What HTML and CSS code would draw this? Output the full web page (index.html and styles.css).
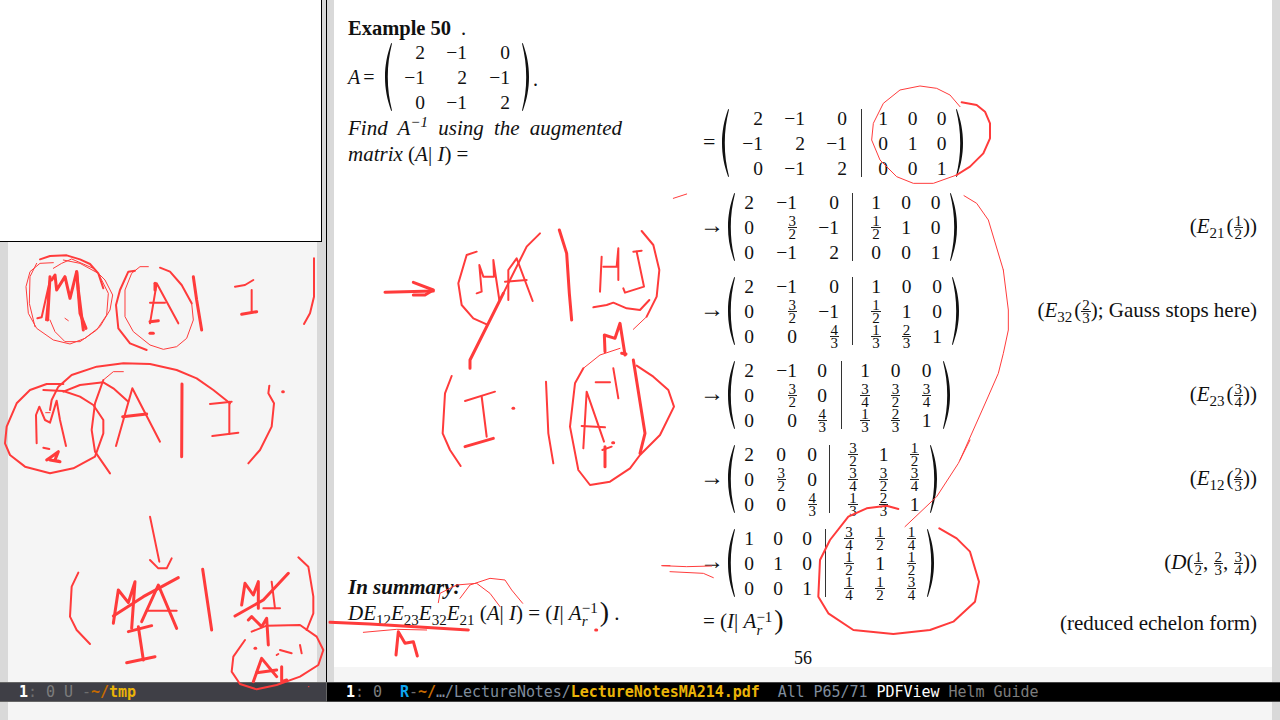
FILE: index.html
```html
<!DOCTYPE html>
<html lang="en">
<head>
<meta charset="utf-8">
<title>LectureNotesMA214.pdf</title>
<link rel="stylesheet" href="styles.css">
</head>
<body>
<svg class="defs" aria-hidden="true"><symbol id="paren" viewBox="0 0 7 68" preserveAspectRatio="none"><path d="M6.2 0C2 12 0 22 0 34c0 12 2 22 6.2 34l.8-.5C4.2 56 2.8 46 2.8 34S4.2 12 7 .5Z"/></symbol></svg>
<div class="frame">
  <div class="windows">
    <aside class="notes">
      <div class="thumb"></div>
      <div class="notes-canvas"></div>
    </aside>
    <main class="viewer">
      <section class="page">
        <div class="columns">
          <div class="col-left">
            <div class="intro">
              <p class="title"><b>Example 50</b><span class="title-dot">.</span></p>
              <div class="def-row">
                <span class="def-a"><i>A</i> =</span>
                <div class="matrix m0">
                  <svg class="paren"><use href="#paren"/></svg>
                  <div class="cells left"><span>2</span><span>−1</span><span>0</span><span>−1</span><span>2</span><span>−1</span><span>0</span><span>−1</span><span>2</span></div>
                  <svg class="paren flip"><use href="#paren"/></svg>
                </div>
                <span class="def-dot">.</span>
              </div>
              <p class="find"><i>Find A<sup>−1</sup> using the augmented matrix</i> (<i>A</i>| <i>I</i>) =</p>
            </div>
            <div class="summary">
              <p class="summary-head"><b><i>In summary:</i></b></p>
              <p class="summary-eq"><i>DE</i><sub>12</sub><i>E</i><sub>23</sub><i>E</i><sub>32</sub><i>E</i><sub>21</sub> (<i>A</i>| <i>I</i>) = (<i>I</i>| <i>A</i><span class="supsub"><sup>−1</sup><sub><i>r</i></sub></span><span class="big">)</span> .</p>
            </div>
          </div>
          <div class="col-right">
            <div class="step">
              <span class="op eq">=</span>
              <div class="matrix m1">
                <svg class="paren"><use href="#paren"/></svg>
                <div class="cells left"><span>2</span><span>−1</span><span>0</span><span>−1</span><span>2</span><span>−1</span><span>0</span><span>−1</span><span>2</span></div>
                <div class="bar"></div>
                <div class="cells right"><span>1</span><span>0</span><span>0</span><span>0</span><span>1</span><span>0</span><span>0</span><span>0</span><span>1</span></div>
                <svg class="paren flip"><use href="#paren"/></svg>
              </div>
            </div>
            <div class="step">
              <span class="op">→</span>
              <div class="matrix m2">
                <svg class="paren"><use href="#paren"/></svg>
                <div class="cells left"><span>2</span><span>−1</span><span>0</span><span>0</span><span class="frac"><span>3</span><span>2</span></span><span>−1</span><span>0</span><span>−1</span><span>2</span></div>
                <div class="bar"></div>
                <div class="cells right"><span>1</span><span>0</span><span>0</span><span class="frac"><span>1</span><span>2</span></span><span>1</span><span>0</span><span>0</span><span>0</span><span>1</span></div>
                <svg class="paren flip"><use href="#paren"/></svg>
              </div>
              <span class="why">(<i>E</i><sub>21</sub>(<span class="frac"><span>1</span><span>2</span></span>))</span>
            </div>
            <div class="step">
              <span class="op">→</span>
              <div class="matrix m3">
                <svg class="paren"><use href="#paren"/></svg>
                <div class="cells left"><span>2</span><span>−1</span><span>0</span><span>0</span><span class="frac"><span>3</span><span>2</span></span><span>−1</span><span>0</span><span>0</span><span class="frac"><span>4</span><span>3</span></span></div>
                <div class="bar"></div>
                <div class="cells right"><span>1</span><span>0</span><span>0</span><span class="frac"><span>1</span><span>2</span></span><span>1</span><span>0</span><span class="frac"><span>1</span><span>3</span></span><span class="frac"><span>2</span><span>3</span></span><span>1</span></div>
                <svg class="paren flip"><use href="#paren"/></svg>
              </div>
              <span class="why">(<i>E</i><sub>32</sub>(<span class="frac"><span>2</span><span>3</span></span>); Gauss stops here)</span>
            </div>
            <div class="step">
              <span class="op">→</span>
              <div class="matrix m4">
                <svg class="paren"><use href="#paren"/></svg>
                <div class="cells left"><span>2</span><span>−1</span><span>0</span><span>0</span><span class="frac"><span>3</span><span>2</span></span><span>0</span><span>0</span><span>0</span><span class="frac"><span>4</span><span>3</span></span></div>
                <div class="bar"></div>
                <div class="cells right"><span>1</span><span>0</span><span>0</span><span class="frac"><span>3</span><span>4</span></span><span class="frac"><span>3</span><span>2</span></span><span class="frac"><span>3</span><span>4</span></span><span class="frac"><span>1</span><span>3</span></span><span class="frac"><span>2</span><span>3</span></span><span>1</span></div>
                <svg class="paren flip"><use href="#paren"/></svg>
              </div>
              <span class="why">(<i>E</i><sub>23</sub>(<span class="frac"><span>3</span><span>4</span></span>))</span>
            </div>
            <div class="step">
              <span class="op">→</span>
              <div class="matrix m5">
                <svg class="paren"><use href="#paren"/></svg>
                <div class="cells left"><span>2</span><span>0</span><span>0</span><span>0</span><span class="frac"><span>3</span><span>2</span></span><span>0</span><span>0</span><span>0</span><span class="frac"><span>4</span><span>3</span></span></div>
                <div class="bar"></div>
                <div class="cells right"><span class="frac"><span>3</span><span>2</span></span><span>1</span><span class="frac"><span>1</span><span>2</span></span><span class="frac"><span>3</span><span>4</span></span><span class="frac"><span>3</span><span>2</span></span><span class="frac"><span>3</span><span>4</span></span><span class="frac"><span>1</span><span>3</span></span><span class="frac"><span>2</span><span>3</span></span><span>1</span></div>
                <svg class="paren flip"><use href="#paren"/></svg>
              </div>
              <span class="why">(<i>E</i><sub>12</sub>(<span class="frac"><span>2</span><span>3</span></span>))</span>
            </div>
            <div class="step">
              <span class="op">→</span>
              <div class="matrix m6">
                <svg class="paren"><use href="#paren"/></svg>
                <div class="cells left"><span>1</span><span>0</span><span>0</span><span>0</span><span>1</span><span>0</span><span>0</span><span>0</span><span>1</span></div>
                <div class="bar"></div>
                <div class="cells right"><span class="frac"><span>3</span><span>4</span></span><span class="frac"><span>1</span><span>2</span></span><span class="frac"><span>1</span><span>4</span></span><span class="frac"><span>1</span><span>2</span></span><span>1</span><span class="frac"><span>1</span><span>2</span></span><span class="frac"><span>1</span><span>4</span></span><span class="frac"><span>1</span><span>2</span></span><span class="frac"><span>3</span><span>4</span></span></div>
                <svg class="paren flip"><use href="#paren"/></svg>
              </div>
              <span class="why">(<i>D</i>(<span class="frac"><span>1</span><span>2</span></span>, <span class="frac"><span>2</span><span>3</span></span>, <span class="frac"><span>3</span><span>4</span></span>))</span>
            </div>
            <div class="step final">
              <span class="final-eq">= (<i>I</i>| <i>A</i><span class="supsub"><sup>−1</sup><sub><i>r</i></sub></span><span class="big">)</span></span>
              <span class="why">(reduced echelon form)</span>
            </div>
          </div>
        </div>
        <p class="pageno">56</p>
      </section>
      <div class="page-gap"></div>
    </main>
  </div>
  <div class="modelines">
    <div class="modeline inactive"><b class="wh">1</b><span class="dim">:</span> <span class="gr">0</span> <span class="gr">U</span> <span class="dim">-</span><span class="or">~/</span><b class="ye">tmp</b></div>
    <div class="modeline active"><b class="wh">1</b><span class="dim">:</span> <span class="gr">0</span>  <b class="bl">R</b><span class="dim">-</span><span class="or">~/</span><span class="sl">…/LectureNotes/</span><b class="ye">LectureNotesMA214.pdf</b>  <span class="sl">All P65/71</span> <span class="wh">PDFView</span> <span class="gr">Helm Guide</span></div>
  </div>
  <div class="echo"></div>
</div>
<svg class="ink" viewBox="0 0 1280 720" aria-hidden="true">
  <g transform="translate(0 230) scale(.33333)">
    <polyline class="m" points="120,88 150,78 200,76 240,88 270,102 295,130 310,175"/>
    <polyline class="t" points="160,98 120,100 90,125 78,170 85,250 110,295 160,330 210,342 255,325 300,290 330,240 338,195 315,150 280,115 215,87 185,100 160,115"/>
    <polyline class="t" points="150,270 165,305 195,335 240,335 290,300 320,255 325,190 295,130 240,100 190,90"/>
    <polyline class="t" points="110,100 90,140 88,220 105,290"/>
    <polyline class="m" points="112,265 125,262 150,150 138,270"/>
    <polyline class="b" points="150,140 143,270"/>
    <polyline class="b" points="155,150 165,135 170,180 195,140 210,205 230,125 235,180 250,300"/>
    <polyline class="b" points="230,125 240,250 258,295"/>
    <polyline class="t" points="195,265 205,272"/>
    <polyline class="t" points="445,110 420,110 395,130 375,180 375,260 400,305 450,345 490,358 530,350 560,325 580,270 575,220"/>
    <polyline class="m" points="480,113 510,125 545,165 575,220"/>
    <polyline class="m" points="405,122 385,125 360,180 348,225 355,295 390,340 440,360"/>
    <polyline class="m" points="450,280 470,160 535,280"/>
    <polyline class="m" points="450,218 495,218"/>
    <polyline class="b" points="450,275 475,272"/>
    <polyline class="b" points="450,310 460,310"/>
    <polyline class="b" points="465,160 465,180"/>
    <polyline class="b" points="580,140 590,210 605,300"/>
    <polyline class="m" points="705,170 735,165 760,150"/>
    <polyline class="m" points="755,180 755,245"/>
    <polyline class="b" points="725,253 770,245"/>
    <polyline class="m" points="942,85 942,200 930,250 912,282"/>
    <polyline class="m" points="190,462 140,462 90,480 50,520 20,590 15,640 30,675 75,710 150,730 220,715 285,680 310,610 310,570 280,525 240,500 190,483 130,480"/>
    <polyline class="m" points="150,540 155,510 175,470 215,435 290,410 370,400 450,402 530,420 590,445 640,480 690,520"/>
    <polyline class="m" points="190,485 240,465 310,457 340,475 385,515"/>
    <polyline class="t" points="370,425 340,425 310,450"/>
    <polyline class="m" points="310,450 285,520 275,600 285,665 330,730"/>
    <polyline class="m" points="110,640 108,555 118,530 135,570 150,578 170,512 180,570 198,648"/>
    <polyline class="m" points="130,653 148,657"/>
    <polyline class="b" points="140,690 150,683 175,665 165,690 180,695 150,690"/>
    <polyline class="t" points="137,548 150,548"/>
    <polyline class="m" points="348,648 397,475 480,635"/>
    <polyline class="b" points="368,560 440,552"/>
    <polyline class="b" points="546,462 545,680"/>
    <polyline class="m" points="630,522 695,515"/>
    <polyline class="m" points="688,515 688,612"/>
    <polyline class="m" points="637,618 715,608"/>
    <polyline class="m" points="808,467 805,490 822,520 815,590 780,660 745,700"/>
    <polyline class="b" points="848,485 850,485"/>
  </g>
  <g transform="translate(0 480) scale(.33333)">
    <polyline class="m" points="450,110 478,245"/>
    <polyline class="m" points="450,240 475,265 500,265 515,235"/>
    <polyline class="m" points="235,278 215,320 210,410 230,450 270,492"/>
    <polyline class="b" points="340,430 355,330 385,368 405,305 395,445"/>
    <polyline class="b" points="425,425 475,315 530,445"/>
    <polyline class="m" points="440,392 530,392"/>
    <polyline class="b" points="340,408 430,350 535,293"/>
    <polyline class="b" points="385,455 455,437"/>
    <polyline class="b" points="415,440 430,540"/>
    <polyline class="b" points="380,548 465,530"/>
    <polyline class="b" points="608,268 635,450"/>
    <polyline class="b" points="725,375 735,310 760,345 775,305 775,385"/>
    <polyline class="m" points="815,305 825,385"/>
    <polyline class="m" points="790,385 840,385"/>
    <polyline class="b" points="705,408 790,360 865,280"/>
    <polyline class="m" points="895,232 925,260 940,350 940,400 920,450"/>
    <polyline class="b" points="745,420 755,410 785,440 800,415 805,495"/>
    <polyline class="m" points="755,455 800,437 900,435 950,470 970,510 955,555 900,590 830,615 770,628 720,612 695,575 700,530 735,480"/>
    <polyline class="b" points="760,605 785,535 830,590"/>
    <polyline class="b" points="770,578 830,570"/>
    <polyline class="b" points="845,560 845,605 860,600"/>
    <polyline class="b" points="765,505 767,505"/>
    <polyline class="m" points="840,510 875,520"/>
    <polyline class="m" points="900,495 905,520"/>
    <polyline class="m" points="830,525 835,522"/>
    <polyline class="t" points="925,620 927,620"/>
  </g>
  <g transform="translate(370 220) scale(.33333)">
    <polyline class="b" points="45,217 190,213"/>
    <polyline class="b" points="130,187 190,210 165,225 130,225"/>
    <polyline class="m" points="320,95 290,105 265,190 275,255 310,295 350,313"/>
    <polyline class="m" points="320,220 335,215 328,135 340,170 372,170 370,120 388,240"/>
    <polyline class="m" points="415,240 415,150 440,115 488,243"/>
    <polyline class="m" points="405,185 470,180"/>
    <polyline class="b" points="300,445 300,420 400,220"/>
    <polyline class="m" points="400,220 470,80 510,40"/>
    <polyline class="b" points="568,30 590,100 598,220 605,300"/>
    <polyline class="m" points="690,215 695,110"/>
    <polyline class="m" points="700,140 740,140 745,85 745,180"/>
    <polyline class="m" points="790,95 815,92"/>
    <polyline class="m" points="800,95 822,200 765,218 760,205"/>
    <polyline class="m" points="670,262 710,255 730,248 770,265 810,270 838,240"/>
    <polyline class="m" points="815,33 850,75 868,150 860,230 830,290"/>
    <polyline class="t" points="830,290 790,328"/>
    <polyline class="b" points="705,395 703,345 735,355 750,310 765,405"/>
    <polyline class="b" points="755,400 768,402"/>
    <polyline class="t" points="750,385 690,405 640,445"/>
    <polyline class="m" points="640,445 615,490 600,620 625,750 660,795 720,785 780,745 810,705 870,645 912,560 895,510 850,470 800,437"/>
    <polyline class="m" points="677,487 720,487"/>
    <polyline class="m" points="730,445 745,535"/>
    <polyline class="m" points="640,685 650,515 702,665"/>
    <polyline class="m" points="635,618 705,622"/>
    <polyline class="m" points="697,690 725,680"/>
    <polyline class="b" points="705,680 705,740"/>
    <polyline class="b" points="728,668 731,668"/>
    <polyline class="b" points="790,420 825,640 810,700"/>
    <polyline class="m" points="245,468 225,520 218,640 240,690 272,738"/>
    <polyline class="m" points="285,543 375,515"/>
    <polyline class="m" points="335,530 350,650"/>
    <polyline class="b" points="285,680 370,655"/>
    <polyline class="b" points="429,565 431,565"/>
    <polyline class="m" points="528,485 535,640 550,730"/>
  </g>
  <g transform="translate(330 560) scale(.33333)">
    <polyline class="b" points="0,187 120,192 415,210"/>
    <polyline class="t" points="100,217 200,208 290,210"/>
    <polyline class="b" points="198,285 205,215 225,250 250,245 262,288"/>
    <polyline class="t" points="325,128 330,100 380,75 440,70 480,100 510,140"/>
    <polyline class="t" points="390,115 420,75 480,55 525,60 545,90 578,130"/>
    <polyline class="b" points="797,210 800,210"/>
    <polyline class="t" points="998,17 1020,17"/>
  </g>
  <g transform="translate(660 80) scale(.33333)">
    <polyline class="t" points="900,80 870,45 830,25 780,18 720,30 670,70 640,130 635,180 660,240 710,290 760,310 820,310 890,285"/>
    <polyline class="m" points="890,285 930,260 970,220 990,175 990,130 975,95 950,75 905,67"/>
    <polyline class="t" points="40,355 80,342"/>
    <polyline class="t" points="912,347 950,370 985,420 1030,570"/>
  </g>
  <g transform="translate(660 270) scale(.33333)">
    <polyline class="t" points="1030,0 1045,120 1045,180 1030,250 1015,310 980,390 900,570"/>
  </g>
  <g transform="translate(660 440) scale(.33333)">
    <polyline class="t" points="930,0 895,70 830,170 735,260"/>
    <polyline class="m" points="715,207 680,197 620,205 565,230 510,300 480,360 475,470 505,520 580,570 700,582 810,570 880,545 945,485 957,425 930,335 890,295 838,265"/>
    <polyline class="t" points="5,377 80,380 155,378"/>
    <polyline class="t" points="30,395 130,400 160,413"/>
  </g>
</svg>
</body>
</html>
```
FILE: styles.css
```css
* { box-sizing: border-box; }
html, body { margin: 0; height: 100%; overflow: hidden; }
body { background: #f5f5f5; font-family: "Liberation Serif", serif; color: #111; position: relative; }
p { margin: 0; }
.defs { width: 0; height: 0; position: absolute; }

.frame { display: flex; flex-direction: column; height: 720px; }
.windows { display: flex; height: 682px; }

.notes { position: relative; width: 327px; padding: 0 9px 0 8px; background: #d9d9d9; border-right: 1px solid #000; }
.notes-canvas { height: 100%; background: #f5f5f5; }
.thumb { position: absolute; left: 0; top: 0; width: 322px; height: 242px; background: #fff; border-right: 1px solid #000; border-bottom: 1px solid #000; }

.viewer { flex: 1; padding: 0 8px 0 7px; background: #d9d9d9; display: flex; flex-direction: column; }
.page { height: 667px; background: #fff; display: flex; flex-direction: column; }
.page-gap { flex: 1; background: #f5f5f5; }

.columns { flex: 1; display: flex; padding: 0 15px 0 14px; }
.col-left { width: 355px; display: flex; flex-direction: column; justify-content: space-between; padding-bottom: 17px; }
.col-right { flex: 1; padding-top: 101px; display: flex; flex-direction: column; }

.intro { width: 274px; padding-top: 16px; font-size: 21px; }
.title { line-height: 24px; font-size: 20.5px; }
.title-dot { margin-left: 10px; }
.def-row { display: flex; align-items: center; height: 70px; margin-top: 2px; }
.def-a { width: 37px; font-size: 20px; word-spacing: -2px; }
.def-dot { margin-left: 4px; font-size: 20px; padding-top: 4px; }
.find { line-height: 26px; text-align: justify; margin-top: 3px; }
.find sup { font-size: 15px; line-height: 0; }

.summary { font-size: 21px; line-height: 26px; }
.summary sub { font-size: 15px; line-height: 0; }
.supsub { display: inline-flex; flex-direction: column; vertical-align: middle; font-size: 15px; line-height: 13px; margin-right: 2px; }
.supsub sup, .supsub sub { font-size: 15px; line-height: 13px; vertical-align: baseline; }
.big { font-size: 28px; line-height: 20px; vertical-align: -1px; }

.step { display: flex; align-items: center; height: 84px; font-size: 21px; }
.final { height: 36px; }
.op { width: 28px; margin-left: -3px; font-size: 24px; line-height: 24px; padding-bottom: 4px; }
.op.eq { width: 19px; margin-left: 0; font-size: 22px; padding-bottom: 2px; }
.why { margin-left: auto; line-height: 24px; }
.why sub { font-size: 15px; line-height: 0; margin-right: 2px; }
.final-eq { line-height: 24px; }

.matrix { display: flex; align-items: center; }
.paren { width: 7px; height: 68px; display: block; fill: #111; flex: none; }
.flip { transform: scaleX(-1); margin-left: var(--pg, 0); }
.cells { display: grid; grid-auto-rows: 25px; align-items: center; font-size: 19.5px; line-height: 25px; }
.cells.left { grid-template-columns: var(--l); justify-items: end; }
.cells.right { grid-template-columns: var(--r); justify-items: center; margin-left: var(--a, 8px); }
.bar { width: 1px; height: 68px; margin-left: var(--g); background: #333; flex: none; }

.frac { display: inline-flex; flex-direction: column; align-items: center; vertical-align: middle; font-size: 15px; line-height: 12px; }
.frac > span:first-child { border-bottom: 1px solid #222; padding: 0 1px; line-height: 12px; }

.m0 { --l: 33px 42px 43px; }
.m0 .left { margin-right: 12px; }
.m1 { --l: 34px 42px 42px; --g: 14px; --r: 30px 29px 29px; --a: 6px; }
.m2 { --l: 19px 43px 42px; --g: 13px; --r: 30px 30px 29px; }
.m3 { --l: 19px 43px 42px; --g: 13px; --r: 30px 31px 30px; }
.m4 { --l: 19px 43px 30px; --g: 14px; --r: 30px 31px 31px; --pg: 1px; }
.m5 { --l: 19px 32px 31px; --g: 12px; --r: 30px 31px 31px; }
.m6 { --l: 19px 29px 29px; --g: 13px; --r: 30px 32px 31px; }

.pageno { height: 22px; font-size: 18px; line-height: 26px; text-align: center; }

.modelines { display: flex; height: 20px; font: 15px/18px "DejaVu Sans Mono", monospace; letter-spacing: -.04px; white-space: pre; }
.modeline { border-top: 1px solid #666; border-bottom: 1px solid #666; padding-left: 19px; }
.inactive { width: 327px; background: #3f3f46; border-right: 1px solid #666; }
.active { flex: 1; background: #000; border-color: #444; }
.wh { color: #fff; }
.dim { color: #6e6e6e; }
.gr { color: #7d7d7d; }
.or { color: #c76b00; font-weight: bold; }
.ye { color: #eab308; }
.bl { color: #0ea5f0; }
.sl { color: #7f8c9c; }

.echo { flex: 1; background: #f5f5f5; border-left: 8px solid #d9d9d9; border-right: 8px solid #d9d9d9; }

.ink { position: absolute; left: 0; top: 0; width: 1280px; height: 720px; pointer-events: none; }
.ink polyline { fill: none; stroke: #ff3b3b; stroke-linecap: round; stroke-linejoin: round; }
.ink .t { stroke-width: 3; }
.ink .m { stroke-width: 6; }
.ink .b { stroke-width: 9; }
```
